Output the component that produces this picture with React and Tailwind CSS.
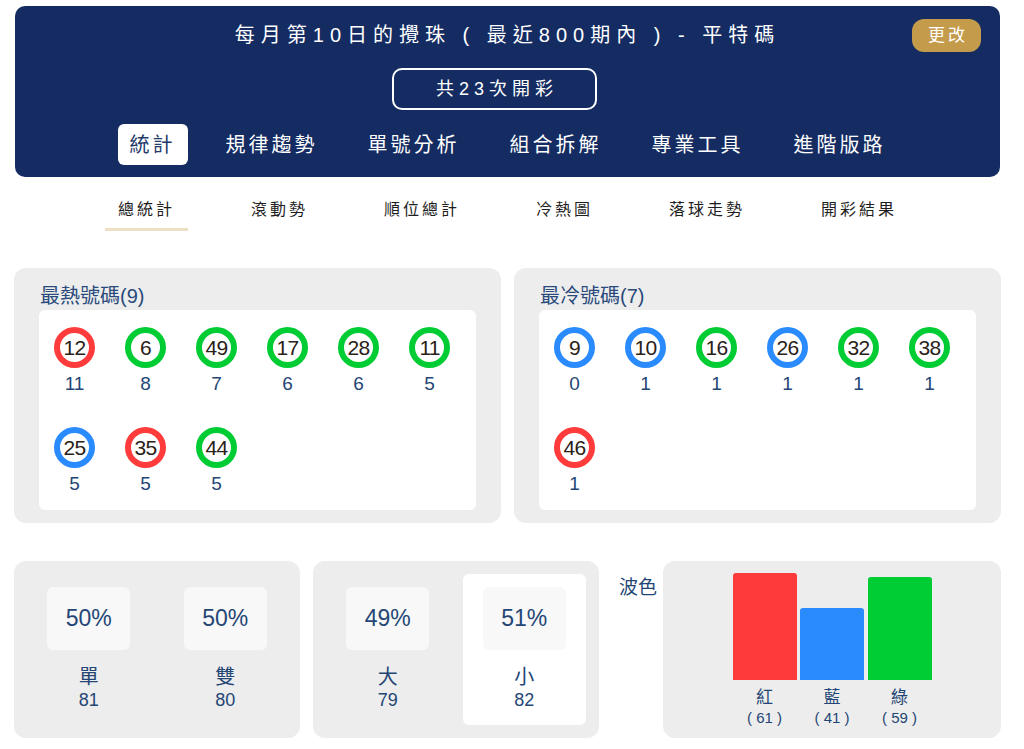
import React from "react";

const FONT = { fontFamily: '"Liberation Sans", "Noto Sans CJK TC", sans-serif' };

const RING = {
  r: "border-[#ff3b3b]",
  g: "border-[#00cc33]",
  b: "border-[#2a8bff]",
};

const hot = [
  ["12", "r", "11"],
  ["6", "g", "8"],
  ["49", "g", "7"],
  ["17", "g", "6"],
  ["28", "g", "6"],
  ["11", "g", "5"],
  ["25", "b", "5"],
  ["35", "r", "5"],
  ["44", "g", "5"],
];

const cold = [
  ["9", "b", "0"],
  ["10", "b", "1"],
  ["16", "g", "1"],
  ["26", "b", "1"],
  ["32", "g", "1"],
  ["38", "g", "1"],
  ["46", "r", "1"],
];

function Ball({ n, c, count }) {
  return (
    <div className="w-[71px] h-[100px] flex flex-col items-center pt-[17px]">
      <div
        className={`w-[41px] h-[41px] rounded-full border-[6px] ${RING[c]} bg-white flex items-center justify-center text-[21px] leading-none text-[#2a2118] tracking-[-0.8px]`}
      >
        {n}
      </div>
      <div className="mt-[6px] text-[19px] leading-[20px] text-[#244675]">{count}</div>
    </div>
  );
}

function NumPanel({ title, items }) {
  return (
    <div className="bg-[#ededed] rounded-[12px] px-[25px] pt-[16px] pb-[13px]">
      <div className="text-[20px] leading-[24px] text-[#2a4a7b] pl-[1px] mb-[2px]">{title}</div>
      <div className="bg-white rounded-[6px] flex flex-wrap h-[200px] content-start">
        {items.map(([n, c, k]) => (
          <Ball key={n} n={n} c={c} count={k} />
        ))}
      </div>
    </div>
  );
}

function StatCol({ pct, label, num, selected }) {
  return (
    <div
      className={`flex flex-col items-center pt-[13px] rounded-[6px] ${selected ? "bg-white" : ""}`}
    >
      <div className="w-[83px] h-[63px] rounded-[6px] bg-[#f8f8f8] flex items-center justify-center text-[23px] text-[#244675]">
        {pct}
      </div>
      <div className="mt-[16px] text-[20px] leading-[23px] text-[#244675]">{label}</div>
      <div className="text-[18px] leading-[22px] text-[#244675]">{num}</div>
    </div>
  );
}

const tabs = ["統計", "規律趨勢", "單號分析", "組合拆解", "專業工具", "進階版路"];
const subtabs = ["總統計", "滾動勢", "順位總計", "冷熱圖", "落球走勢", "開彩結果"];

export default function App() {
  return (
    <div className="w-[1024px] h-[749px] bg-white overflow-hidden" style={FONT}>
      <div className="pl-[14px] pr-[23px]">
        {/* Header */}
        <div className="mt-[6px] mx-[1px] rounded-[10px] bg-[#142c62] relative pt-[15px] pb-[12px] flex flex-col items-center">
          <div className="text-[20px] leading-[28px] tracking-[6px] text-white whitespace-pre">
            每月第10日的攪珠 ( 最近800期內 ) - 平特碼
          </div>
          <div className="absolute right-[19px] top-[13px] w-[69px] h-[33px] rounded-[12px] bg-[#c49b4b] text-white text-[17px] tracking-[3px] pl-[3px] flex items-center justify-center">
            更改
          </div>
          <div className="mt-[19px] mr-[26px] w-[205px] h-[42px] border-2 border-white rounded-[10px] flex items-center justify-center text-[18px] tracking-[5px] pl-[5px] text-white">
            共23次開彩
          </div>
          <div className="mt-[14px] flex gap-[26px]">
            {tabs.map((t, i) => (
              <div
                key={t}
                className={`h-[41px] px-[12px] flex items-center rounded-[6px] text-[20px] tracking-[3px] ${
                  i === 0 ? "bg-white text-[#1f3a6a]" : "text-white"
                }`}
              >
                {t}
              </div>
            ))}
          </div>
        </div>

        {/* Sub tabs */}
        <div className="mt-[21px] flex justify-center gap-[50px]">
          {subtabs.map((t, i) => (
            <div
              key={t}
              className={`px-[13px] pb-[6px] border-b-[3px] text-[16px] leading-[24px] tracking-[3px] text-[#1e1e1e] ${
                i === 0 ? "border-[#ede0c4]" : "border-transparent"
              }`}
            >
              {t}
            </div>
          ))}
        </div>

        {/* Hot / cold */}
        <div className="mt-[37px] grid grid-cols-2 gap-[13px]">
          <NumPanel title="最熱號碼(9)" items={hot} />
          <NumPanel title="最冷號碼(7)" items={cold} />
        </div>

        {/* Bottom row */}
        <div className="mt-[38px] flex">
          <div className="w-[286px] h-[177px] bg-[#ededed] rounded-[12px] p-[13px] grid grid-cols-2 gap-[13px]">
            <StatCol pct="50%" label="單" num="81" />
            <StatCol pct="50%" label="雙" num="80" />
          </div>
          <div className="ml-[13px] w-[286px] h-[177px] bg-[#ededed] rounded-[12px] p-[13px] grid grid-cols-2 gap-[13px]">
            <StatCol pct="49%" label="大" num="79" />
            <StatCol pct="51%" label="小" num="82" selected />
          </div>
          <div className="ml-[20px] mt-[15px] text-[19px] leading-[24px] text-[#244675]">波色</div>
          <div className="ml-[6px] flex-1 h-[177px] rounded-[12px] bg-[#ededed] flex flex-col items-center pt-[12px]">
            <div className="flex items-end gap-[3.5px] h-[107px]">
              <div className="w-[64px] h-[107px] rounded-t-[3px] bg-[#ff3a3a]" />
              <div className="w-[64px] h-[72px] rounded-t-[3px] bg-[#2a8bff]" />
              <div className="w-[64px] h-[103px] rounded-t-[3px] bg-[#00cc33]" />
            </div>
            <div className="flex gap-[3.5px] mt-[8px] text-[#244675]">
              {[
                ["紅", "61"],
                ["藍", "41"],
                ["綠", "59"],
              ].map(([l, v]) => (
                <div key={l} className="w-[64px] flex flex-col items-center">
                  <div className="text-[17px] leading-[20px]">{l}</div>
                  <div className="text-[15px] leading-[20px] whitespace-pre">{`( ${v} )`}</div>
                </div>
              ))}
            </div>
          </div>
        </div>
      </div>
    </div>
  );
}
